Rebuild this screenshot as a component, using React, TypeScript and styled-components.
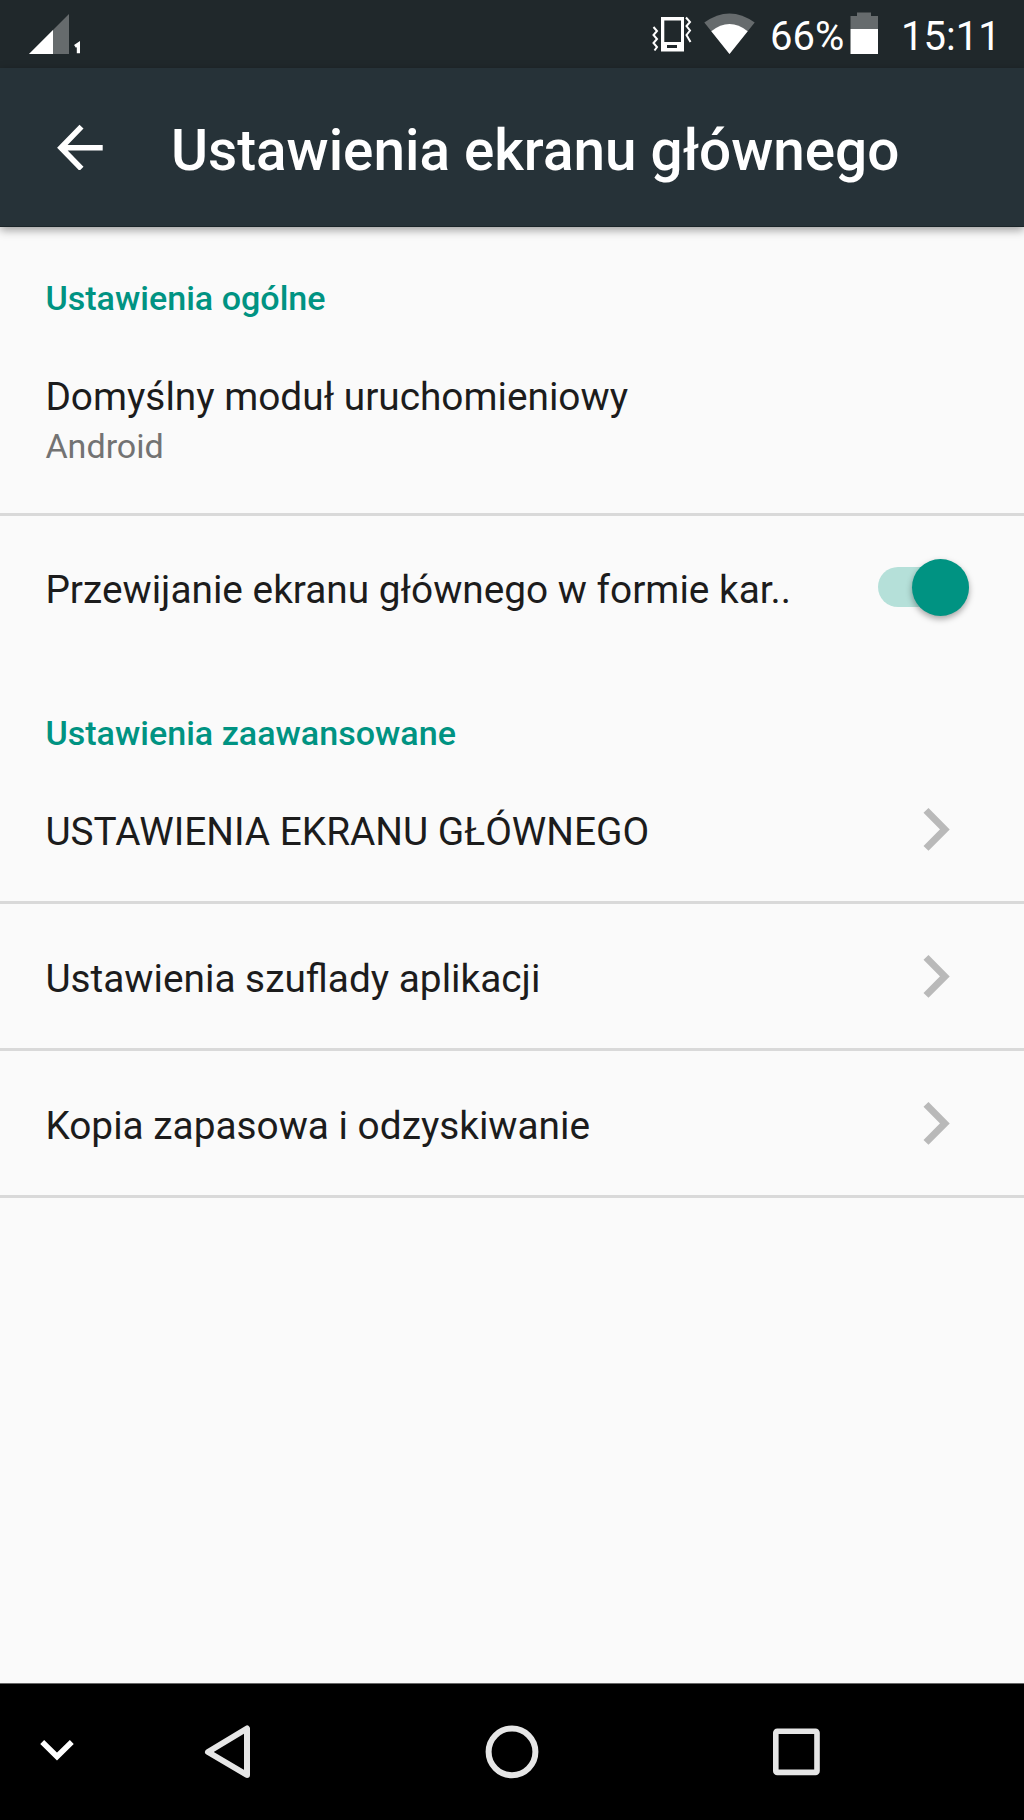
import React from 'react';
import styled, { createGlobalStyle } from 'styled-components';

const Global = createGlobalStyle`
  * { box-sizing: border-box; }
  body { margin: 0; background: #fafafa; font-family: Roboto, "Noto Sans", sans-serif; }
`;

const Screen = styled.div`
  display: flex;
  flex-direction: column;
  width: 1024px;
  height: 1820px;
  overflow: hidden;
  background: #fafafa;
`;

const StatusBar = styled.div`
  display: flex;
  align-items: flex-start;
  justify-content: space-between;
  height: 68px;
  flex: none;
  background: #20282b;
  color: #fff;
`;

const StatusGroup = styled.div`
  display: flex;
  align-items: flex-start;
`;

const StatusText = styled.span<{ $left: number; $width: number }>`
  margin-left: ${p => p.$left}px;
  width: ${p => p.$width}px;
  padding-top: 13px;
  font-size: 40px;
  line-height: 47px;
  white-space: nowrap;
`;

const Icon = styled.svg`
  display: block;
  flex: none;
`;

const AppBar = styled.header`
  display: flex;
  align-items: center;
  position: relative;
  height: 159px;
  flex: none;
  padding-left: 57px;
  background: #263238;
  border-bottom: 1px solid #1b2529;
  box-shadow: 0 3px 9px rgba(0, 0, 0, 0.38);
`;

const Title = styled.h1`
  margin: 8px 0 0 68px;
  color: #fff;
  font-size: 56.65px;
  font-weight: 500;
  line-height: 68px;
  white-space: nowrap;
`;

const Content = styled.main`
  flex: 1;
`;

const SectionTitle = styled.h2<{ $gap?: number }>`
  margin: 0 0 ${p => p.$gap ?? 0}px;
  padding: 51px 45px 0 45.4px;
  color: #009382;
  font-size: 34.1px;
  font-weight: 500;
  line-height: 40px;
`;

const Row = styled.div<{ $height: number; $divided?: boolean }>`
  display: flex;
  align-items: center;
  justify-content: space-between;
  height: ${p => p.$height}px;
  padding: 0 45px 0 45.4px;
  border-bottom: ${p => (p.$divided ? '3px solid #d9d9d9' : 'none')};
`;

const Labels = styled.div<{ $top?: number }>`
  display: flex;
  flex-direction: column;
  gap: 6px;
  padding-top: ${p => p.$top ?? 6}px;
`;

const Label = styled.span`
  color: #1c1c1c;
  font-size: 38.8px;
  line-height: 46px;
  white-space: nowrap;
`;

const Summary = styled.span`
  color: #737373;
  font-size: 34.1px;
  line-height: 40px;
`;

const Track = styled.div`
  display: flex;
  align-items: center;
  justify-content: flex-end;
  width: 91px;
  height: 40px;
  margin: 0 10px 4px 0;
  border-radius: 20px;
  background: #b5e0d9;
`;

const Thumb = styled.div`
  width: 57px;
  height: 57px;
  flex: none;
  border-radius: 50%;
  background: #009382;
  box-shadow: 0 3px 6px rgba(0, 0, 0, 0.35);
`;

const ChevronBox = styled.div`
  padding-right: 29px;
`;

const NavBar = styled.nav`
  display: grid;
  grid-template-columns: 114px 228px 340px 228px 114px;
  height: 137px;
  flex: none;
  background: #000;
  border-top: 1px solid #666;
`;

const Chevron = () => (
  <ChevronBox>
    <Icon width="27" height="44" viewBox="0 0 27 44">
      <path d="M3 3.4L21.8 22.4L3 41.4" fill="none" stroke="#b9b9b9" strokeWidth="7" />
    </Icon>
  </ChevronBox>
);

const LINKS = [
  'USTAWIENIA EKRANU GŁÓWNEGO',
  'Ustawienia szuflady aplikacji',
  'Kopia zapasowa i odzyskiwanie',
];

export default function App() {
  return (
    <Screen>
      <Global />
      <StatusBar>
        <Icon width="100" height="68" viewBox="0 0 100 68">
          <path d="M69 14V54H29Z" fill="#666b6d" />
          <path d="M53 30V54H29Z" fill="#fff" />
          <path d="M75 46.4L78.4 44V53.3" fill="none" stroke="#fff" strokeWidth="3.2" />
        </Icon>
        <StatusGroup>
          <Icon width="118" height="68" viewBox="646 0 118 68">
            <path d="M661 17H684V51.5H661ZM664.3 20.5V42H681V20.5ZM667 45V48H677V45Z" fill="#fff" fillRule="evenodd" />
            <path d="M653.5 27L657 31L653.5 35L657 39L653.5 43L657 47L654.5 50.5M686 17.5L690 22L686.5 26L690 30.5L686.5 35L690.5 42" fill="none" stroke="#fff" strokeWidth="2" />
            <path d="M729.5 54L704.3 22.6Q729.5 4.4 754.7 22.6Z" fill="#666b6d" />
            <path d="M729.5 54L711.3 31.2Q729.5 16.8 747.7 31.2Z" fill="#fff" />
          </Icon>
          <StatusText $left={6} $width={73}>66%</StatusText>
          <Icon width="39" height="68" viewBox="843 0 39 68">
            <path d="M850.5 29V16H857V12.5H871V16H878V29Z" fill="#666b6d" />
            <path d="M850.5 29H878V54H850.5Z" fill="#fff" />
          </Icon>
          <StatusText $left={19} $width={123}>15:11</StatusText>
        </StatusGroup>
      </StatusBar>
      <AppBar>
        <Icon width="46" height="46" viewBox="0 0 46 46">
          <path d="M24.5 2.6L4 23.7L24.5 44.8M4 23.7H45.7" fill="none" stroke="#fff" strokeWidth="5.6" />
        </Icon>
        <Title>Ustawienia ekranu głównego</Title>
      </AppBar>
      <Content>
        <SectionTitle>Ustawienia ogólne</SectionTitle>
        <Row $height={198} $divided>
          <Labels $top={9}>
            <Label>Domyślny moduł uruchomieniowy</Label>
            <Summary>Android</Summary>
          </Labels>
        </Row>
        <Row $height={146}>
          <Labels $top={2}>
            <Label>Przewijanie ekranu głównego w formie kar..</Label>
          </Labels>
          <Track>
            <Thumb />
          </Track>
        </Row>
        <SectionTitle $gap={4}>Ustawienia zaawansowane</SectionTitle>
        {LINKS.map(text => (
          <Row key={text} $height={147} $divided>
            <Labels>
              <Label>{text}</Label>
            </Labels>
            <Chevron />
          </Row>
        ))}
      </Content>
      <NavBar>
        <Icon width="114" height="136" viewBox="0 1684 114 136">
          <path d="M42.2 1742L57 1756.5L71.8 1742" fill="none" stroke="#fff" strokeWidth="5.6" />
        </Icon>
        <Icon width="228" height="136" viewBox="114 1684 228 136">
          <path d="M247 1728.5V1775L208 1752Z" fill="none" stroke="#e6e6e6" strokeWidth="6" strokeLinejoin="round" />
        </Icon>
        <Icon width="340" height="136" viewBox="342 1684 340 136">
          <circle cx="512" cy="1751.8" r="23.4" fill="none" stroke="#e6e6e6" strokeWidth="6" />
        </Icon>
        <Icon width="228" height="136" viewBox="682 1684 228 136">
          <rect x="775.8" y="1731.2" width="41.2" height="41.2" rx="1.5" fill="none" stroke="#e6e6e6" strokeWidth="5.6" />
        </Icon>
      </NavBar>
    </Screen>
  );
}
